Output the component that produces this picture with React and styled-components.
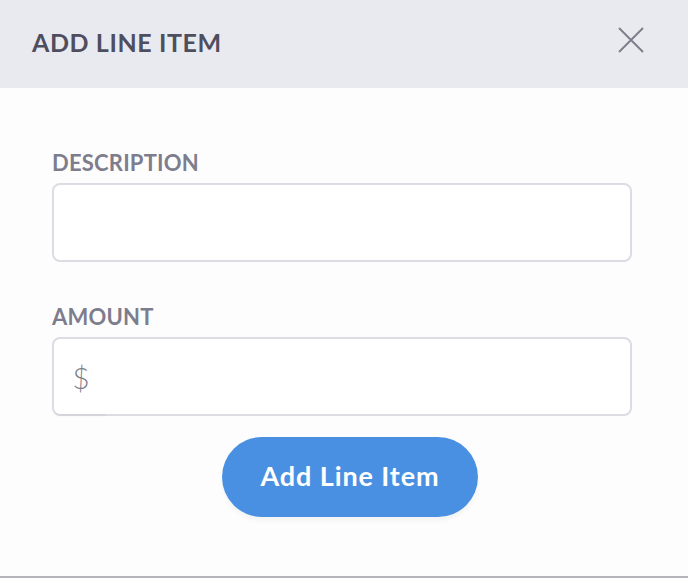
import React from "react";
import styled, { createGlobalStyle } from "styled-components";

const GlobalStyle = createGlobalStyle`
	html, body {
		margin: 0;
		padding: 0;
		background: #fdfdfe;
		font-family: Lato, "Open Sans", sans-serif;
	}
`;

const Modal = styled.div`
	width: 688px;
	height: 578px;
	box-sizing: border-box;
	display: flex;
	flex-direction: column;
	background: #fdfdfe;
	border-bottom: 2px solid #b4b4bc;
`;

const Header = styled.header`
	height: 88px;
	flex-shrink: 0;
	background: #e9eaef;
	display: flex;
	align-items: center;
	justify-content: space-between;
	padding: 0 44px 0 32px;
	box-sizing: border-box;
`;

const Title = styled.h2`
	margin: 0 0 4px;
	font-size: 25px;
	font-weight: 700;
	color: #4f4e5e;
	letter-spacing: 0.6px;
`;

const CloseButton = styled.button`
	border: none;
	background: none;
	padding: 0;
	margin-bottom: 8px;
	cursor: pointer;
	display: flex;
`;

const Body = styled.div`
	display: flex;
	flex-direction: column;
	padding: 63px 56px 0 52px;
`;

const Field = styled.div`
	display: flex;
	flex-direction: column;
	margin-bottom: ${(p) => p.$gap || "0px"};
`;

const Label = styled.label`
	font-size: 22px;
	font-weight: 700;
	color: #7e7d8d;
	margin-bottom: 8px;
	line-height: 24px;
	letter-spacing: 0.2px;
`;

const InputBox = styled.div`
	height: 79px;
	box-sizing: border-box;
	border: 2px solid #dcdce5;
	border-radius: 8px;
	background: #ffffff;
	display: flex;
	align-items: center;
`;

const Prefix = styled.span`
	width: 54px;
	align-self: stretch;
	display: flex;
	align-items: center;
	justify-content: center;
	font-size: 30px;
	font-weight: 300;
	color: #7c7d8a;
	box-shadow: 0 4px 3px -2px rgba(0, 0, 0, 0.05);
	border-radius: 6px 0 0 6px;
`;

const Input = styled.input`
	flex: 1;
	height: 100%;
	border: none;
	outline: none;
	background: transparent;
	font-family: inherit;
	font-size: 20px;
	padding: 0 ${(p) => (p.$flush ? "0" : "20px")};
	box-sizing: border-box;
`;

const Actions = styled.div`
	display: flex;
	justify-content: center;
	padding-top: 21px;
	padding-left: 16px;
`;

const PrimaryButton = styled.button`
	width: 256px;
	height: 80px;
	padding-bottom: 4px;
	border: none;
	border-radius: 40px;
	background: #4a90e2;
	color: #ffffff;
	font-family: Lato, "Open Sans", sans-serif;
	font-size: 27px;
	font-weight: 700;
	letter-spacing: 0.9px;
	box-shadow: 0 4px 4px rgba(0, 0, 0, 0.04);
	cursor: pointer;
`;

export default function App() {
	return (
		<>
			<GlobalStyle />
			<Modal>
				<Header>
					<Title>ADD LINE ITEM</Title>
					<CloseButton aria-label="Close">
						<svg width="26" height="26" viewBox="0 0 26 26">
							<path d="M1 1 L25 25 M25 1 L1 25" stroke="#7f7f8b" strokeWidth="2" fill="none" />
						</svg>
					</CloseButton>
				</Header>
				<Body>
					<Field $gap="43px">
						<Label>DESCRIPTION</Label>
						<InputBox>
							<Input />
						</InputBox>
					</Field>
					<Field>
						<Label>AMOUNT</Label>
						<InputBox>
							<Prefix>$</Prefix>
							<Input $flush />
						</InputBox>
					</Field>
					<Actions>
						<PrimaryButton>Add Line Item</PrimaryButton>
					</Actions>
				</Body>
			</Modal>
		</>
	);
}
